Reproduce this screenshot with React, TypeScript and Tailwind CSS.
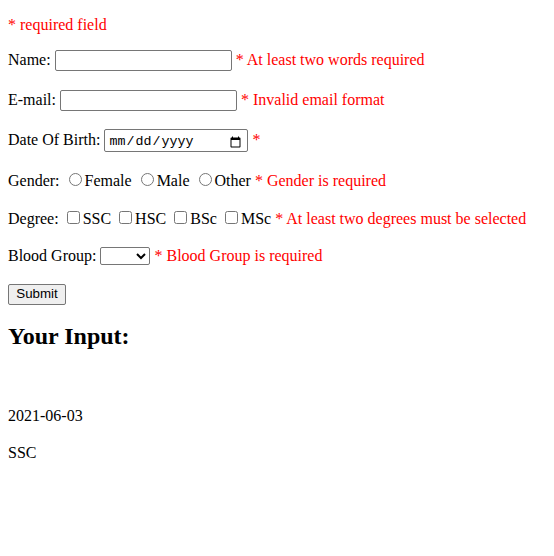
import React from "react";

const Err = ({ children }: { children: React.ReactNode }) => (
  <span className="text-[#ff0000]">{children}</span>
);

export default function App() {
  const textInput =
    "w-[177px] h-[21px] border border-[#767676] rounded-[2px] bg-white px-[3px] align-baseline font-['Liberation_Sans',Arial,sans-serif] text-[13.33px]";
  const radio = "m-[2px_3px_0px_5px] align-baseline";
  const check = "m-[3px_3px_3px_4px] align-baseline";

  return (
    <div className="min-h-[556px] bg-white px-2 pt-4 font-['Liberation_Serif','Times_New_Roman',serif] text-base leading-[18.4px] text-black">
      <p className="mb-4">
        <Err>* required field</Err>
      </p>

      <form onSubmit={(e) => e.preventDefault()}>
        Name: <input type="text" name="name" className={textInput} />{" "}
        <Err>* At least two words required</Err>
        <br />
        <br />
        E-mail: <input type="text" name="email" className={textInput} />{" "}
        <Err>* Invalid email format</Err>
        <br />
        <br />
        Date Of Birth:{" "}
        <input
          type="date"
          name="dob"
          className="w-[144px] h-[23px] border border-[#767676] rounded-[2px] bg-white px-[3px] pt-[3px] align-baseline font-['Liberation_Mono','DejaVu_Sans_Mono',monospace] text-[13.33px]"
        />{" "}
        <Err>*</Err>
        <br />
        <br />
        Gender: <input type="radio" name="gender" className={radio} />
        Female <input type="radio" name="gender" className={radio} />
        Male <input type="radio" name="gender" className={radio} />
        Other <Err>* Gender is required</Err>
        <br />
        <br />
        Degree: <input type="checkbox" name="ssc" className={check} />
        SSC <input type="checkbox" name="hsc" className={check} />
        HSC <input type="checkbox" name="bsc" className={check} />
        BSc <input type="checkbox" name="msc" className={check} />
        MSc <Err>* At least two degrees must be selected</Err>
        <br />
        <br />
        Blood Group:{" "}
        <select
          name="blood"
          defaultValue=""
          className="w-[50px] h-[18px] border border-[#767676] rounded-[2px] bg-white align-baseline font-['Liberation_Sans',Arial,sans-serif] text-[13.33px]"
        >
          <option value=""></option>
          <option value="A+">A+</option>
          <option value="B+">B+</option>
          <option value="O+">O+</option>
          <option value="AB+">AB+</option>
        </select>{" "}
        <Err>* Blood Group is required</Err>
        <br />
        <br />
        <input
          type="submit"
          value="Submit"
          className="w-[58px] h-[21px] border border-[#767676] rounded-[2px] bg-[#efefef] px-[6px] align-baseline font-['Liberation_Sans',Arial,sans-serif] text-[13.33px] text-black"
        />
      </form>

      <h2 className="mt-[18px] mb-[20px] text-2xl font-bold leading-[27.6px]">Your Input:</h2>
      <br />
      <br />
      2021-06-03
      <br />
      <br />
      SSC
    </div>
  );
}
